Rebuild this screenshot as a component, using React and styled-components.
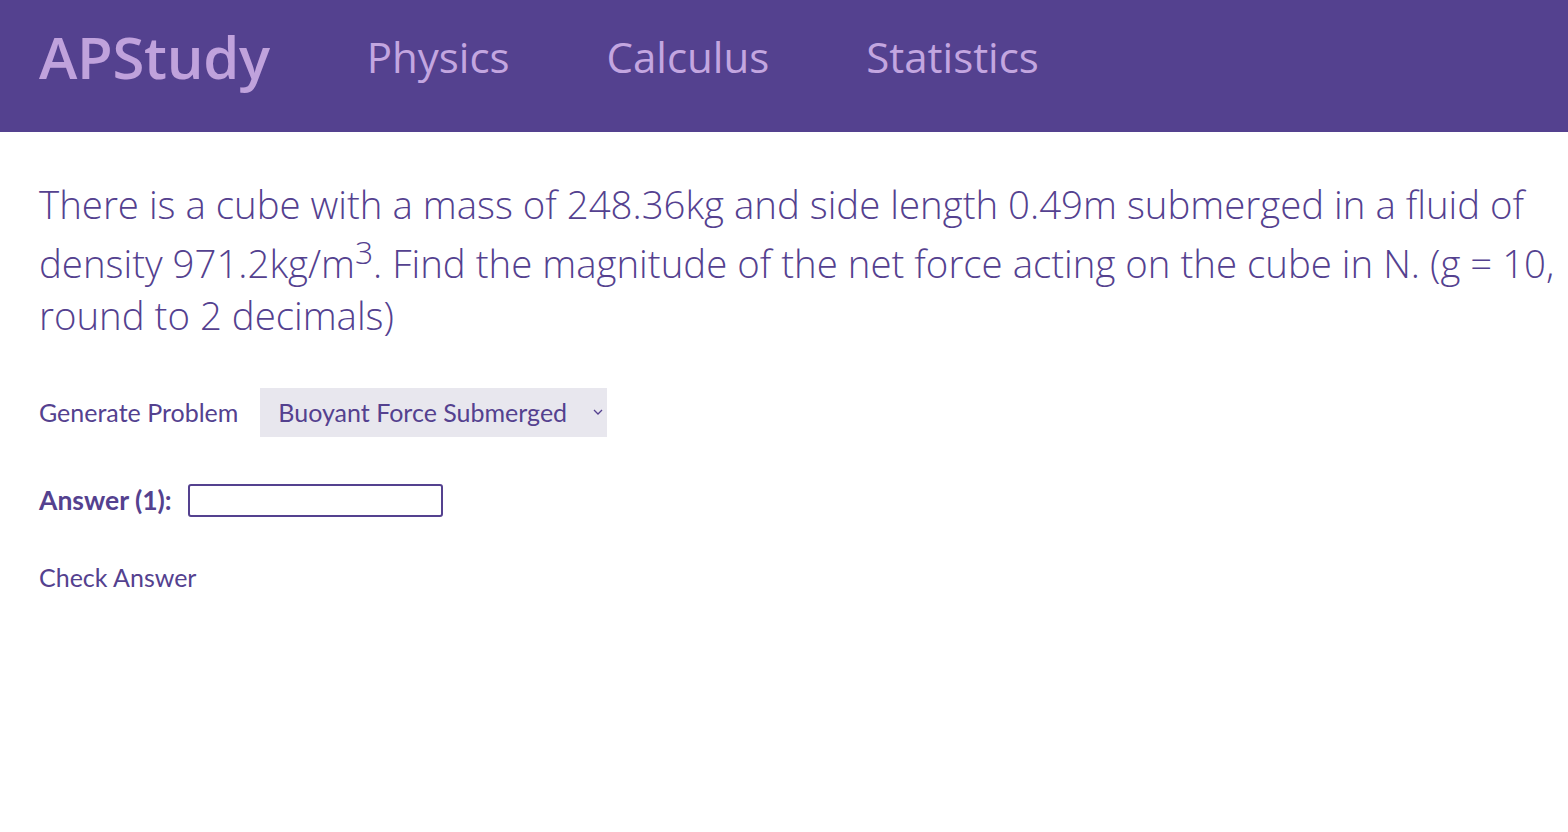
import React, { useState } from "react";
import styled, { createGlobalStyle } from "styled-components";

const GlobalStyle = createGlobalStyle`
  body {
    margin: 0;
    background: #ffffff;
    font-family: "Open Sans", "Noto Sans", sans-serif;
    color: #54418f;
  }
`;

const Navbar = styled.nav`
  display: flex;
  align-items: center;
  height: 132px;
  padding: 0 39px;
  background: #54418f;
  gap: 97px;
`;

const Logo = styled.a`
  font-size: 58px;
  font-weight: 600;
  color: #c0a2dc;
  text-decoration: none;
  letter-spacing: -0.3px;
  margin-top: -20px;
`;

const NavLink = styled.a`
  font-size: 42px;
  font-weight: 400;
  color: #c3a6e0;
  text-decoration: none;
  margin-top: -20px;
`;

const Main = styled.main`
  padding: 46px 8px 0 39px;
`;

const Question = styled.p`
  margin: 0;
  font-size: 38.4px;
  font-weight: 300;
  color: #54418f;

  sup {
    font-size: 0.83em;
    vertical-align: super;
  }
`;

const Row = styled.div`
  display: flex;
  align-items: center;
  gap: ${(p) => p.gap || 24}px;
  margin-top: ${(p) => p.top}px;
`;

const TextButton = styled.button`
  padding: 0;
  border: none;
  background: none;
  font-family: "Lato", "Noto Sans", sans-serif;
  font-size: 25px;
  color: #54418f;
  cursor: pointer;
`;

const SelectBox = styled.div`
  position: relative;
  display: flex;
  align-items: center;
  height: 49px;
  width: 347px;
  box-sizing: border-box;
  padding: 0 0 0 18px;
  background: #e8e7ee;
  font-family: "Lato", "Noto Sans", sans-serif;
  font-size: 25px;
  color: #54418f;

  svg {
    position: absolute;
    right: 4px;
    top: 21px;
  }
`;

const Label = styled.label`
  font-family: "Lato", "Noto Sans", sans-serif;
  font-size: 26.5px;
  font-weight: 700;
  color: #54418f;
`;

const AnswerInput = styled.input`
  width: 255px;
  height: 33px;
  box-sizing: border-box;
  border: 2px solid #54418f;
  border-radius: 3px;
  background: #fff;
  outline: none;
`;

function App() {
  const [answer, setAnswer] = useState("");

  return (
    <>
      <GlobalStyle />
      <Navbar>
        <Logo href="#">APStudy</Logo>
        <NavLink href="#">Physics</NavLink>
        <NavLink href="#">Calculus</NavLink>
        <NavLink href="#">Statistics</NavLink>
      </Navbar>
      <Main>
        <Question>
          There is a cube with a mass of 248.36kg and side length 0.49m submerged in a fluid of
          density 971.2kg/m<sup>3</sup>. Find the magnitude of the net force acting on the cube in N. (g = 10,
          round to 2 decimals)
        </Question>
        <Row top={47} gap={22}>
          <TextButton>Generate Problem</TextButton>
          <SelectBox>
            Buoyant Force Submerged
            <svg width="10" height="6" viewBox="0 0 10 6">
              <path d="M1 1l4 4 4-4" fill="none" stroke="#54418f" strokeWidth="1.3" />
            </svg>
          </SelectBox>
        </Row>
        <Row top={47} gap={16}>
          <Label>Answer (1):</Label>
          <AnswerInput value={answer} onChange={(e) => setAnswer(e.target.value)} />
        </Row>
        <Row top={45}>
          <TextButton>Check Answer</TextButton>
        </Row>
      </Main>
    </>
  );
}

export default App;
